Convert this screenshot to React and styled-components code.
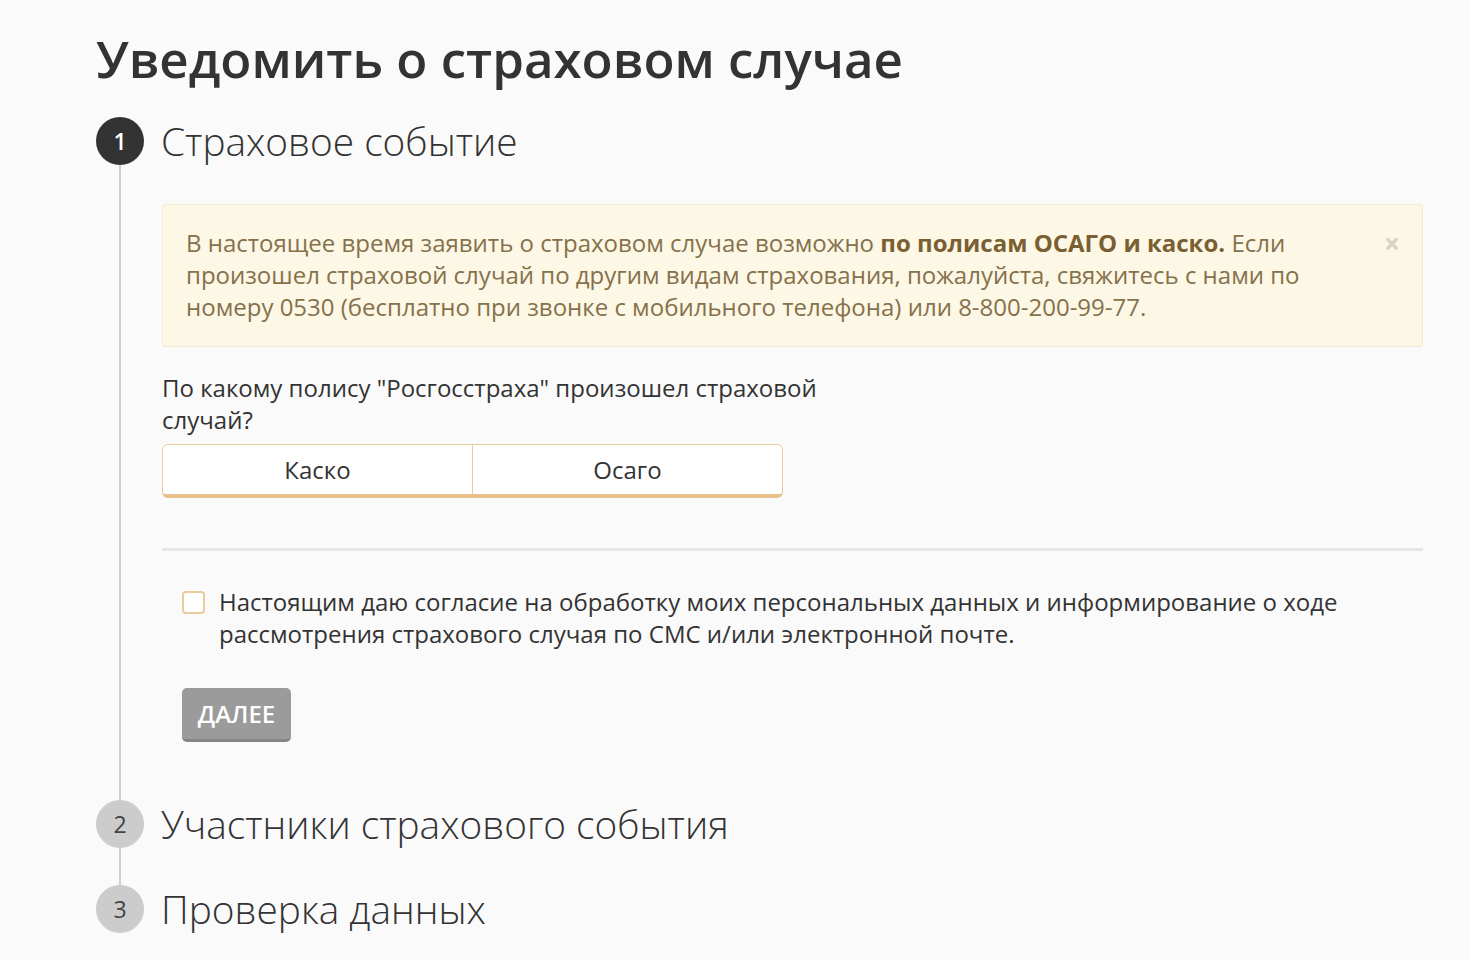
import React, { useState } from "react";
import styled, { createGlobalStyle } from "styled-components";

const GlobalStyle = createGlobalStyle`
  html, body {
    margin: 0;
    padding: 0;
    background: #fafafa;
  }
  body {
    font-family: "Open Sans", "Noto Sans", Arial, sans-serif;
    color: #333;
  }
  * {
    box-sizing: border-box;
  }
`;

const steps = [
  { num: 1, title: "Страховое событие", active: true },
  { num: 2, title: "Участники страхового события" },
  { num: 3, title: "Проверка данных" },
];

const policies = ["Каско", "Осаго"];

const Page = styled.div`
  padding: 25px 47px 0 96px;
  min-height: 960px;
`;

const Title = styled.h1`
  margin: 0 0 25px;
  font-size: 51px;
  line-height: 67px;
  font-weight: 600;
  color: #333;
`;

const Steps = styled.div`
  display: flex;
  flex-direction: column;
`;

const Step = styled.div`
  display: flex;
  gap: 17px;
`;

const Marker = styled.div`
  width: 48px;
  flex-shrink: 0;
  display: flex;
  flex-direction: column;
  align-items: center;
`;

const Circle = styled.div`
  width: 48px;
  height: 48px;
  border-radius: 50%;
  display: flex;
  align-items: center;
  justify-content: center;
  font-size: 23px;
  font-weight: ${(p) => (p.$active ? 600 : 400)};
  background: ${(p) => (p.$active ? "#333" : "#cccccc")};
  color: ${(p) => (p.$active ? "#fff" : "#444")};
`;

const Line = styled.div`
  flex: 1;
  width: 2px;
  background: #cfcfcf;
`;

const StepBody = styled.div`
  flex: 1;
  padding-bottom: ${(p) => p.$pad}px;
`;

const StepTitle = styled.div`
  height: 48px;
  display: flex;
  align-items: center;
  font-size: 38.8px;
  font-weight: 300;
  color: #333;
`;

const Alert = styled.div`
  position: relative;
  margin: 39px 0 0 1px;
  padding: 22px 60px 23px 23px;
  background: #fdf7e5;
  border: 1px solid #f5eacd;
  border-radius: 4px;
  color: #85714b;
  font-size: 24px;
  line-height: 32px;

  b {
    color: #7a5f32;
    font-weight: 700;
  }
`;

const Close = styled.span`
  position: absolute;
  top: 22px;
  right: 22px;
  font-size: 28px;
  line-height: 32px;
  font-weight: 700;
  color: #d6d1c3;
  cursor: pointer;
`;

const Question = styled.div`
  margin-top: 25px;
  padding-left: 1px;
  max-width: 700px;
  font-size: 24px;
  line-height: 32px;
  color: #333;
`;

const Toggle = styled.div`
  margin: 8px 0 0 1px;
  width: 621px;
  display: flex;
  background: #fff;
  border: 1px solid #eacb9d;
  border-bottom: 4px solid #e8c08a;
  border-radius: 6px;
  overflow: hidden;
`;

const Option = styled.button`
  flex: 1;
  height: 49px;
  border: none;
  border-left: ${(p) => (p.$first ? "none" : "1px solid #eacb9d")};
  background: ${(p) => (p.$selected ? "#fbefdc" : "#fff")};
  font-family: inherit;
  font-size: 24px;
  color: #333;
  cursor: pointer;
`;

const Divider = styled.hr`
  margin: 50px 0 0 1px;
  border: none;
  height: 3px;
  background: #e6e6e6;
`;

const Consent = styled.label`
  margin: 35px 0 0 21px;
  display: flex;
  gap: 14px;
  font-size: 24px;
  line-height: 32px;
  color: #333;
  cursor: pointer;
`;

const Box = styled.span`
  margin-top: 5px;
  width: 23px;
  height: 23px;
  flex-shrink: 0;
  border: 2px solid #eacb9d;
  border-radius: 4px;
  background: ${(p) => (p.$checked ? "#e8c08a" : "#fff")};
`;

const NextButton = styled.button`
  margin: 38px 0 0 21px;
  width: 109px;
  height: 54px;
  border: none;
  border-bottom: 3px solid #858585;
  border-radius: 5px;
  background: #9b9b9b;
  color: #fff;
  font-family: inherit;
  font-size: 24px;
  font-weight: 600;
  text-transform: uppercase;
  cursor: default;
`;

export default function App() {
  const [policy, setPolicy] = useState(null);
  const [agree, setAgree] = useState(false);
  const [alertOpen, setAlertOpen] = useState(true);

  return (
    <Page>
      <GlobalStyle />
      <Title>Уведомить о страховом случае</Title>
      <Steps>
        {steps.map((step, i) => (
          <Step key={step.num}>
            <Marker>
              <Circle $active={step.active}>{step.num}</Circle>
              {i < steps.length - 1 && <Line />}
            </Marker>
            <StepBody $pad={i === 0 ? 58 : i === 1 ? 37 : 0}>
              <StepTitle>{step.title}</StepTitle>
              {step.active && (
                <>
                  {alertOpen && (
                    <Alert>
                      В настоящее время заявить о страховом случае возможно{" "}
                      <b>по полисам ОСАГО и каско.</b> Если произошел страховой
                      случай по другим видам страхования, пожалуйста, свяжитесь
                      с нами по номеру 0530 (бесплатно при звонке с мобильного
                      телефона) или 8-800-200-99-77.
                      <Close onClick={() => setAlertOpen(false)}>×</Close>
                    </Alert>
                  )}
                  <Question>
                    По какому полису "Росгосстраха" произошел страховой случай?
                  </Question>
                  <Toggle>
                    {policies.map((p, idx) => (
                      <Option
                        key={p}
                        $first={idx === 0}
                        $selected={policy === p}
                        onClick={() => setPolicy(p)}
                      >
                        {p}
                      </Option>
                    ))}
                  </Toggle>
                  <Divider />
                  <Consent onClick={() => setAgree(!agree)}>
                    <Box $checked={agree} />
                    <span>
                      Настоящим даю согласие на обработку моих персональных
                      данных и информирование о ходе рассмотрения страхового
                      случая по СМС и/или электронной почте.
                    </span>
                  </Consent>
                  <NextButton>Далее</NextButton>
                </>
              )}
            </StepBody>
          </Step>
        ))}
      </Steps>
    </Page>
  );
}
